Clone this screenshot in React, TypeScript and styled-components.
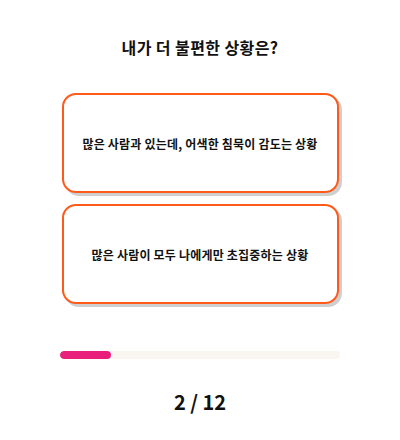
import styled, { createGlobalStyle } from "styled-components";

const GlobalStyle = createGlobalStyle`
  body {
    margin: 0;
    background: #ffffff;
    font-family: "Noto Sans CJK KR", "Noto Sans", sans-serif;
    color: #111111;
  }
`;

const Page = styled.div`
  width: 400px;
  height: 440px;
  display: flex;
  flex-direction: column;
  align-items: center;
`;

const Title = styled.h1`
  margin: 36px 0 0;
  font-size: 16px;
  line-height: 22px;
  font-weight: 700;
  letter-spacing: 0.4px;
`;

const Options = styled.div`
  margin-top: 35px;
  display: flex;
  flex-direction: column;
  gap: 11px;
`;

const OptionButton = styled.button`
  width: 277px;
  height: 100px;
  border: 2px solid #ff5a1a;
  border-radius: 14px;
  background: #ffffff;
  box-shadow: 3px 3px 0 #cfcfcf;
  font-family: inherit;
  font-size: 12px;
  font-weight: 700;
  letter-spacing: 0.2px;
  color: #111111;
  cursor: pointer;
`;

const Track = styled.div`
  margin-top: 47px;
  width: 280px;
  height: 8px;
  border-radius: 4px;
  background: #f9f5f1;
  overflow: hidden;
`;

const Fill = styled.div`
  height: 100%;
  border-radius: 4px;
  background: #e8207c;
`;

const Counter = styled.div`
  margin-top: 30px;
  font-size: 20px;
  line-height: 26px;
  font-weight: 700;
`;

const options = [
  "많은 사람과 있는데, 어색한 침묵이 감도는 상황",
  "많은 사람이 모두 나에게만 초집중하는 상황",
];

export default function App() {
  const current = 2;
  const total = 12;
  return (
    <Page>
      <GlobalStyle />
      <Title>내가 더 불편한 상황은?</Title>
      <Options>
        {options.map((text) => (
          <OptionButton key={text}>{text}</OptionButton>
        ))}
      </Options>
      <Track>
        <Fill style={{ width: `${(current / total) * 100 + 1.5}%` }} />
      </Track>
      <Counter>
        {current} / {total}
      </Counter>
    </Page>
  );
}
